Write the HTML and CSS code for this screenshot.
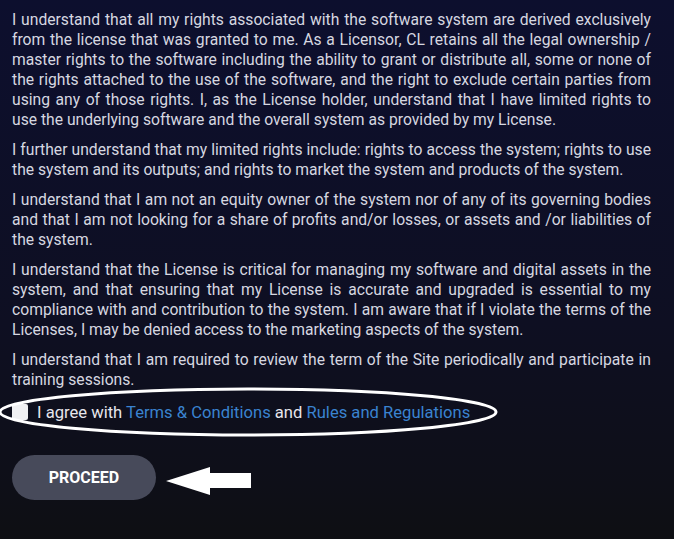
FILE: index.html
```html
<!DOCTYPE html>
<html>
<head>
<meta charset="utf-8">
<link rel="stylesheet" href="styles.css">
</head>
<body>
<div class="page">
  <div class="terms">
    <p>I understand that all my rights associated with the software system are derived exclusively from the license that was granted to me. As a Licensor, CL retains all the legal ownership / master rights to the software including the ability to grant or distribute all, some or none of the rights attached to the use of the software, and the right to exclude certain parties from using any of those rights. I, as the License holder, understand that I have limited rights to use the underlying software and the overall system as provided by my License.</p>
    <p>I further understand that my limited rights include: rights to access the system; rights to use the system and its outputs; and rights to market the system and products of the system.</p>
    <p>I understand that I am not an equity owner of the system nor of any of its governing bodies and that I am not looking for a share of profits and/or losses, or assets and /or liabilities of the system.</p>
    <p>I understand that the License is critical for managing my software and digital assets in the system, and that ensuring that my License is accurate and upgraded is essential to my compliance with and contribution to the system. I am aware that if I violate the terms of the Licenses, I may be denied access to the marketing aspects of the system.</p>
    <p>I understand that I am required to review the term of the Site periodically and participate in training sessions.</p>
  </div>
  <div class="agree">
    <span class="box"></span>
    <span class="agree-text">I agree with <a class="link">Terms &amp; Conditions</a> and <a class="link">Rules and Regulations</a></span>
    <svg class="ellipse" width="500" height="52" viewBox="0 0 500 52"><ellipse cx="248" cy="25" rx="248" ry="23" fill="none" stroke="#fff" stroke-width="3"/></svg>
  </div>
  <div class="actions">
    <button class="proceed">PROCEED</button>
    <svg class="arrow" width="90" height="30" viewBox="0 0 90 30"><polygon points="0,15 44,1 44,7 85,7 85,22 44,22 44,29" fill="#fff"/></svg>
  </div>
</div>
</body>
</html>
```

FILE: styles.css
```css
html, body {
  margin: 0;
  padding: 0;
}
body {
  width: 674px;
  height: 539px;
  overflow: hidden;
  background: linear-gradient(to bottom, #0d0f2e 0%, #0e0f22 60%, #0e0f18 90%, #0e0f13 100%);
  font-family: Roboto, "Liberation Sans", sans-serif;
}
.page {
  padding: 10px 23px 0 12px;
}
.terms p {
  margin: 0 0 10px 0;
  font-size: 15.68px;
  line-height: 20px;
  color: #d6d7e0;
  text-align: justify;
}
.agree {
  position: relative;
  display: flex;
  align-items: center;
  gap: 9px;
  height: 24px;
  margin-top: 10px;
}
.box {
  width: 16px;
  height: 16px;
  border-radius: 2px;
  background: #f0f0f2;
  flex: none;
}
.agree-text {
  font-size: 16.6px;
  color: #e6e6ec;
}
.link {
  color: #3a83d0;
}
.ellipse {
  position: absolute;
  left: -12px;
  top: -13px;
}
.actions {
  display: flex;
  align-items: center;
  margin-top: 31px;
}
.proceed {
  width: 144px;
  height: 45px;
  border: none;
  border-radius: 23px;
  background: #474a5a;
  color: #fff;
  font-family: Roboto, "Liberation Sans", sans-serif;
  font-weight: 700;
  font-size: 16px;
}
.arrow {
  margin-left: 10px;
  margin-top: 6px;
}
```
